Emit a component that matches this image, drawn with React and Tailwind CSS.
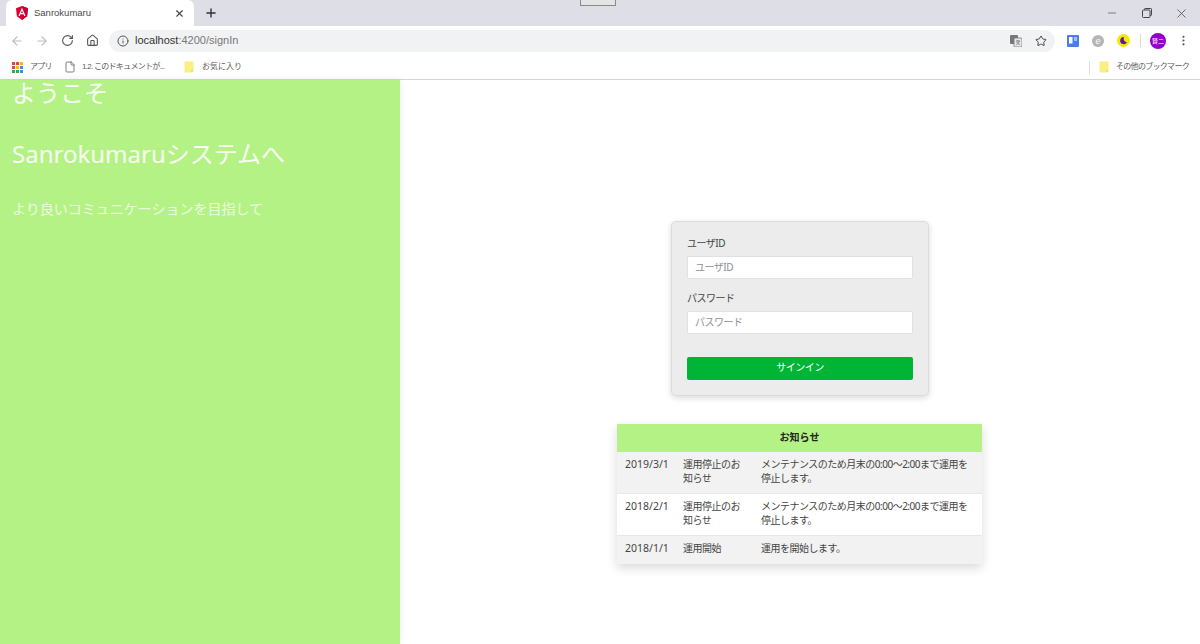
import React from 'react';
import { ArrowLeft, ArrowRight, RotateCw, Home, Info, Star, File, X, Plus, Minus, MoreVertical } from 'lucide-react';

const font = { fontFamily: '"Noto Sans", "Noto Sans CJK JP", sans-serif' };
const chromeFont = { fontFamily: '"Liberation Sans", "Noto Sans CJK JP", sans-serif' };

const NOTICES = [
  { date: '2019/3/1', title: '運用停止のお知らせ', body: 'メンテナンスのため月末の0:00～2:00まで運用を停止します。', bg: 'bg-[#f2f2f2]', h: 'h-[42px]' },
  { date: '2018/2/1', title: '運用停止のお知らせ', body: 'メンテナンスのため月末の0:00～2:00まで運用を停止します。', bg: 'bg-white', h: 'h-[42px]' },
  { date: '2018/1/1', title: '運用開始', body: '運用を開始します。', bg: 'bg-[#f2f2f2]', h: 'h-[28px]' },
];

const Folder = () => (
  <svg width="10" height="12" viewBox="0 0 10 12">
    <path d="M0.5 0.5h9v9l-2 2h-7z" fill="#fbef7f" />
    <path d="M7.5 11.5v-2h2z" fill="#d8cc60" />
  </svg>
);

const AppsIcon = () => (
  <svg width="11" height="11" viewBox="0 0 11 11">
    {['#ea4335', '#ea4335', '#fbbc05', '#ea4335', '#fbbc05', '#4285f4', '#34a853', '#34a853', '#4285f4'].map((c, i) => (
      <rect key={i} x={(i % 3) * 4} y={Math.floor(i / 3) * 4} width="3" height="3" fill={c} />
    ))}
  </svg>
);

const AngularLogo = () => (
  <svg width="12" height="14" viewBox="0 0 12 14">
    <path d="M6 0L0 2.2l.9 8L6 14l5.1-3.8.9-8z" fill="#dd0031" />
    <path d="M6 0v14l5.1-3.8.9-8z" fill="#c3002f" />
    <path d="M6 1.8L2.4 10h1.4l.7-1.8h3l.7 1.8h1.4zm1 5.2H5l1-2.5z" fill="#fff" />
  </svg>
);

const BrowserChrome = () => (
  <div className="shrink-0" style={chromeFont}>
    {/* tab strip */}
    <div className="relative h-[26px] bg-[#dedfe6] flex items-end pl-[6px]">
      <div className="w-[188px] h-[26px] bg-white rounded-t-[6px] flex items-center pl-[10px] pr-[9px]">
        <AngularLogo />
        <span className="ml-[6px] text-[9.5px] text-[#4a4a4a] flex-1">Sanrokumaru</span>
        <X size={11} strokeWidth={2.4} className="text-[#444]" />
      </div>
      <Plus size={14} strokeWidth={2.4} className="ml-[10px] mb-[6px] text-[#333]" />
      <div className="absolute left-[580px] top-0 w-[36px] h-[6px] bg-[#e4e4e4] border border-[#8a8a8a] border-t-0" />
      <div className="absolute right-[1px] top-0 h-[26px] flex items-center text-[#444]">
        <div className="w-[35px] flex justify-center"><Minus size={12} strokeWidth={1.3} /></div>
        <div className="w-[35px] flex justify-center">
          <svg width="10" height="10" viewBox="0 0 10 10" fill="none" stroke="currentColor">
            <rect x="0.5" y="2" width="7.5" height="7.5" rx="1" />
            <path d="M2.5 2V1.2a.7.7 0 0 1 .7-.7h5.6a.7.7 0 0 1 .7.7v5.6a.7.7 0 0 1-.7.7H8" />
          </svg>
        </div>
        <div className="w-[35px] flex justify-center"><X size={15} strokeWidth={1.2} /></div>
      </div>
    </div>
    {/* address bar */}
    <div className="h-[29px] bg-white flex items-center">
      <ArrowLeft size={14} className="ml-[10px] text-[#b8bbc0]" />
      <ArrowRight size={14} className="ml-[11px] text-[#b8bbc0]" />
      <RotateCw size={13} className="ml-[12px] text-[#555]" />
      <Home size={13} className="ml-[12px] text-[#555]" />
      <div className="ml-[10px] w-[946px] h-[22px] rounded-full bg-[#f1f2f4] flex items-center pl-[8px] pr-[8px]">
        <Info size={12} className="text-[#555]" />
        <span className="ml-[6px] text-[11px] text-[#777]"><span className="text-[#333]">localhost</span>:4200/signIn</span>
        <div className="ml-auto flex items-center gap-[13px]">
          <svg width="12" height="12" viewBox="0 0 12 12">
            <rect x="0" y="0" width="8" height="9" rx="1" fill="#777" />
            <rect x="4" y="3" width="8" height="9" rx="1" fill="#e6e6e6" stroke="#777" strokeWidth="0.8" />
            <path d="M6 6h4M8 5v1M9.3 6c-.4 2-1.6 3-3 3.5M6.8 6.6c.4 1.4 1.4 2.4 2.9 2.9" fill="none" stroke="#666" strokeWidth="0.7" />
          </svg>
          <Star size={12} strokeWidth={2} className="text-[#444]" />
        </div>
      </div>
      <svg className="ml-[12px]" width="12" height="12" viewBox="0 0 12 12">
        <rect width="12" height="12" rx="1" fill="#4c7cf0" />
        <rect x="2" y="2" width="3.5" height="6.5" fill="#fff" />
        <rect x="7" y="2" width="3" height="4" fill="#a9c1f7" />
      </svg>
      <div className="ml-[13px] w-[12px] h-[12px] rounded-full bg-[#b5b5b5] text-white text-[9px] leading-[12px] text-center italic">e</div>
      <svg className="ml-[13px]" width="13" height="13" viewBox="0 0 13 13">
        <circle cx="6.5" cy="6.5" r="6.5" fill="#f5e900" />
        <path d="M7 3a3.6 3.6 0 1 0 3 5.2A3.6 3.6 0 0 1 7 3z" fill="#5b1aa8" />
      </svg>
      <div className="ml-[10px] w-px h-[13px] bg-[#dcdcdc]" />
      <div className="ml-[9px] w-[16px] h-[16px] rounded-full bg-[#9400c8] text-white text-[6px] leading-[16px] text-center">賢二</div>
      <MoreVertical size={13} className="ml-[11px] text-[#555]" />
    </div>
    {/* bookmarks */}
    <div className="h-[25px] bg-white border-b border-[#d5d5d5] flex items-center text-[8px] tracking-[-0.7px] text-[#5a5a5a]">
      <div className="ml-[12px]"><AppsIcon /></div>
      <span className="ml-[7px]">アプリ</span>
      <File size={12} strokeWidth={1.5} className="ml-[12px] text-[#555]" />
      <span className="ml-[6px] w-[85px]">1.2. このドキュメントが...</span>
      <div className="ml-[17px]"><Folder /></div>
      <span className="ml-[8px] tracking-normal">お気に入り</span>
      <div className="ml-auto w-px h-[13px] bg-[#dcdcdc]" />
      <div className="ml-[9px]"><Folder /></div>
      <span className="ml-[7px] mr-[11px]">その他のブックマーク</span>
    </div>
  </div>
);

export default function App() {
  return (
    <div className="w-[1200px] h-[644px] overflow-hidden flex flex-col bg-white" style={font}>
      <BrowserChrome />
      <div className="flex flex-1 min-h-0">
        <aside className="w-[400px] shrink-0 bg-[#b5f286] text-white/90 pl-[12px] shadow-[0_0_8px_rgba(0,0,0,0.08)] overflow-hidden">
          <h1 className="text-[24px] leading-[28px] font-normal -mt-[1px]">ようこそ</h1>
          <h2 className="text-[24px] leading-[28px] font-normal mt-[33px]">Sanrokumaruシステムへ</h2>
          <p className="text-[14px] leading-[20px] mt-[31px] text-white/75">より良いコミュニケーションを目指して</p>
        </aside>
        <main className="flex-1 flex flex-col items-center pt-[141px]">
          <form className="w-[258px] h-[175px] bg-[#ececec] border border-[#dcdcdc] rounded-[5px] shadow-[0_2px_6px_rgba(0,0,0,0.15)] px-[15px] pt-[13px] text-[10px] tracking-[-0.5px]">
            <label className="block leading-[16px] text-[#444]">ユーザID</label>
            <input placeholder="ユーザID" className="mt-[5px] block w-full h-[23px] bg-white border border-[#dee2e6] rounded-[2px] px-[7px] pb-[2px] placeholder:text-[#8a9097]" />
            <label className="mt-[11px] block leading-[16px] text-[#444]">パスワード</label>
            <input placeholder="パスワード" className="mt-[5px] block w-full h-[23px] bg-white border border-[#dee2e6] rounded-[2px] px-[7px] pb-[2px] placeholder:text-[#8a9097]" />
            <button type="button" className="mt-[23px] block w-full h-[23px] pb-[2px] bg-[#00b536] rounded-[2px] text-white">サインイン</button>
          </form>
          <section className="mt-[28px] mr-[1px] w-[365px] shadow-[0_4px_10px_rgba(0,0,0,0.15)] text-[10px] leading-[14px] text-[#444]">
            <div className="h-[28px] pb-[2px] bg-[#b5f286] flex items-center justify-center font-bold text-[#222]">お知らせ</div>
            {NOTICES.map((n, i) => (
              <div key={i} className={`flex pl-[8px] pr-[7px] pt-[5px] border-b border-[#e8e8e8] last:border-b-0 ${n.bg} ${n.h}`}>
                <div className="w-[58px] shrink-0 text-[10.5px]">{n.date}</div>
                <div className="w-[78px] shrink-0 pr-[17px] tracking-[-0.5px]">{n.title}</div>
                <div className="flex-1 tracking-[-0.5px]">{n.body}</div>
              </div>
            ))}
          </section>
        </main>
      </div>
    </div>
  );
}
